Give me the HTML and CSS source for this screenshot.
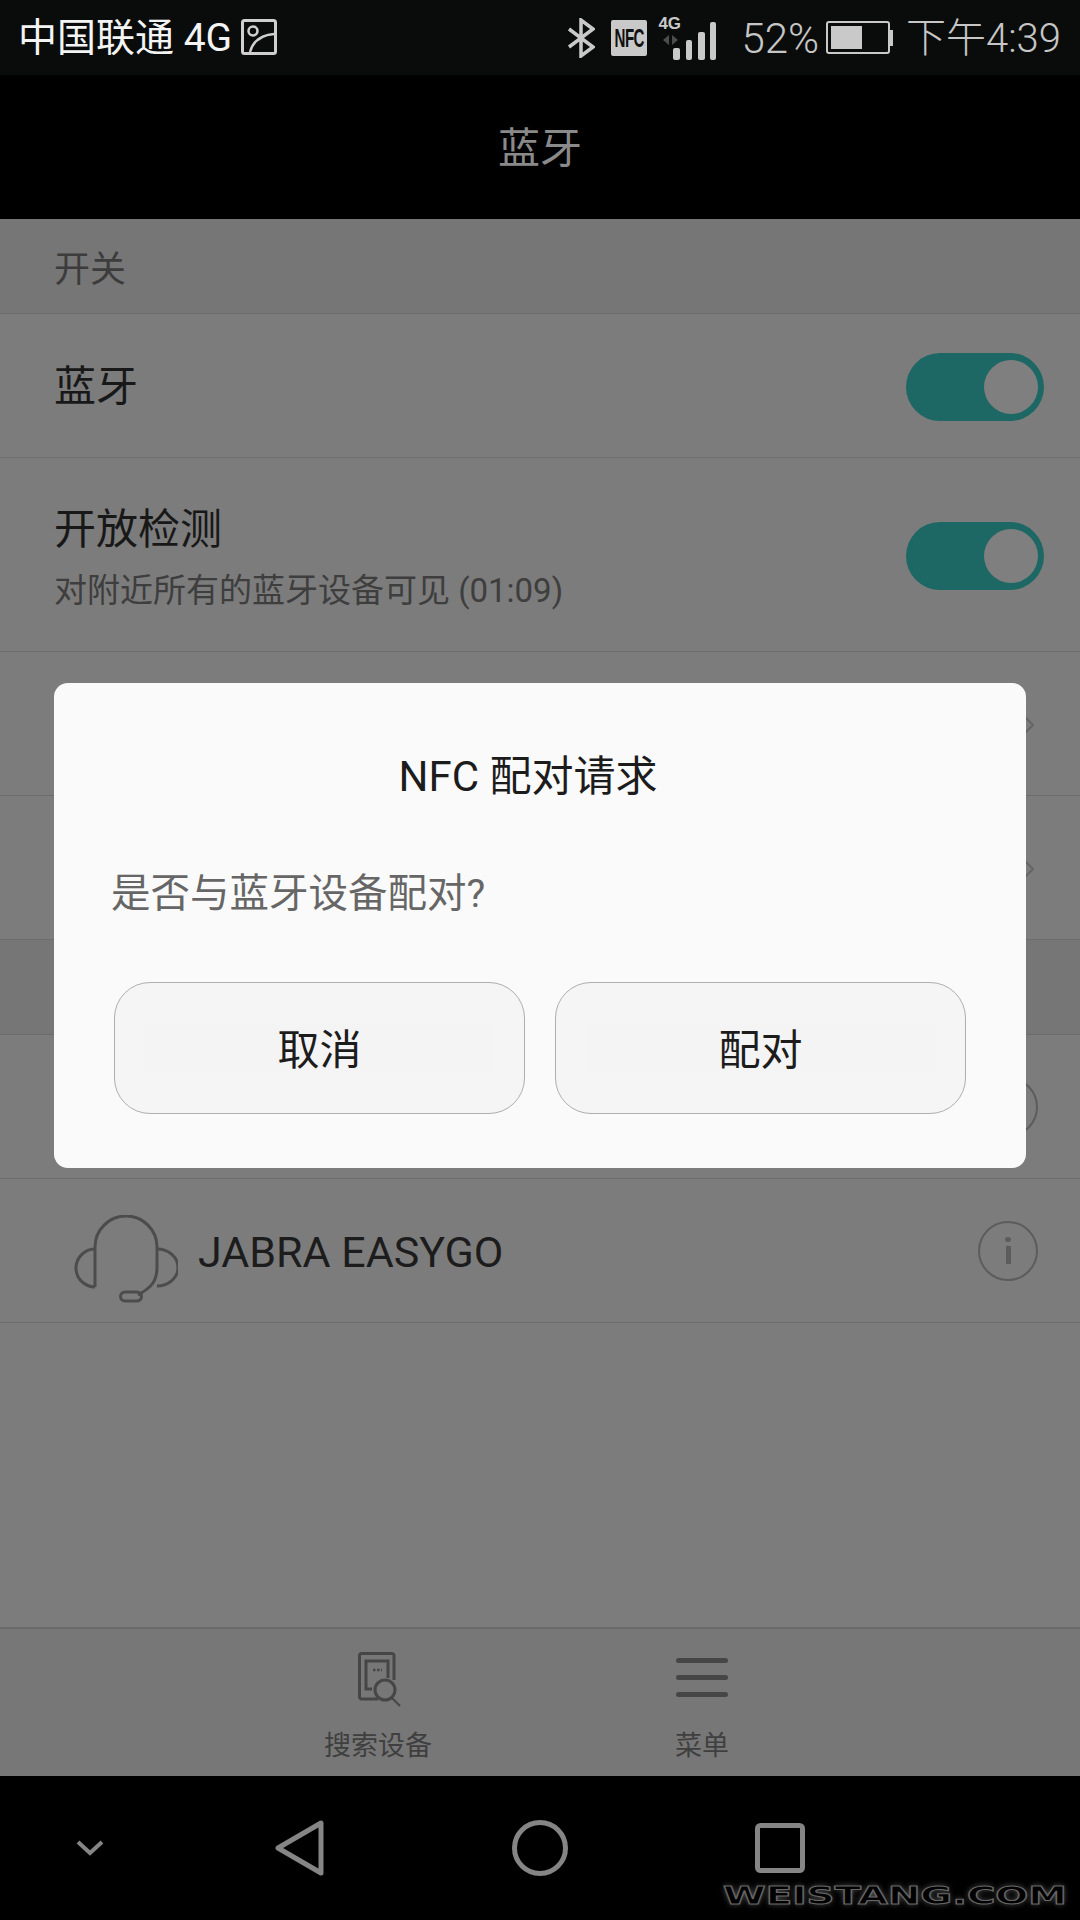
FILE: index.html
```html
<!DOCTYPE html>
<html lang="zh-CN">
<head>
    <meta charset="UTF-8">
    <meta name="viewport" content="width=device-width, initial-scale=1.0">
    <title>蓝牙</title>
    <link rel="stylesheet" href="styles.css">
</head>
<body>
    <div class="screen">
        <!-- Status bar -->
        <div class="status-bar">
            <div class="status-left">
                <span class="carrier">中国联通 4G</span>
                <svg class="pic-icon" width="36" height="36" viewBox="0 0 36 36" fill="none" stroke="#cfcfcf">
                    <rect x="1.5" y="1.5" width="33" height="33" rx="2" stroke-width="3"/>
                    <circle cx="12" cy="12" r="4.5" stroke-width="2.5"/>
                    <path d="M9 33 C12 22 21 16 33 15" stroke-width="2.5"/>
                </svg>
            </div>
            <div class="status-right">
                <svg class="bt-icon" width="28" height="40" viewBox="0 0 28 40" fill="none" stroke="#c9c9c9" stroke-width="3.5">
                    <path d="M2 11 L26 29 L14 38 V2 L26 11 L2 29"/>
                </svg>
                <div class="nfc-box"><span class="nfc-text">NFC</span></div>
                <div class="signal">
                    <span class="net-text">4G</span>
                    <svg width="60" height="46" viewBox="0 0 60 46">
                        <path d="M11 20 L5 25 L11 30 Z M14 20 L20 25 L14 30 Z" fill="#4c4c4c"/>
                        <rect x="15" y="33" width="7" height="12" rx="2" fill="#c9c9c9"/>
                        <rect x="28" y="25" width="6" height="20" rx="2" fill="#c9c9c9"/>
                        <rect x="40" y="17" width="7" height="28" rx="2" fill="#c9c9c9"/>
                        <rect x="52" y="7" width="6" height="38" rx="2" fill="#c9c9c9"/>
                    </svg>
                </div>
                <span class="battery-pct">52%</span>
                <div class="battery"><div class="battery-fill"></div></div>
                <div class="battery-nub"></div>
                <span class="clock">下午4:39</span>
            </div>
        </div>

        <div class="action-bar">蓝牙</div>

        <div class="content">
            <div class="section">开关</div>
            <div class="row">
                <div class="row-title">蓝牙</div>
                <div class="toggle"><div class="knob"></div></div>
            </div>
            <div class="row row-tall">
                <div class="row-text">
                    <div class="row-title">开放检测</div>
                    <div class="row-sub">对附近所有的蓝牙设备可见 (01:09)</div>
                </div>
                <div class="toggle"><div class="knob"></div></div>
            </div>
            <div class="row">
                <div></div>
                <svg class="chevron" width="10" height="20" viewBox="0 0 10 20" fill="none" stroke="#656565" stroke-width="2">
                    <path d="M1 2 L9 10 L1 18"/>
                </svg>
            </div>
            <div class="row">
                <div></div>
                <svg class="chevron" width="10" height="20" viewBox="0 0 10 20" fill="none" stroke="#656565" stroke-width="2">
                    <path d="M1 2 L9 10 L1 18"/>
                </svg>
            </div>
            <div class="section"></div>
            <div class="row">
                <div></div>
                <div class="info"><span class="info-dot"></span><span class="info-bar"></span></div>
            </div>
            <div class="row">
                <div class="device">
                    <svg width="106" height="88" viewBox="0 0 106 88" fill="none" stroke="#4c4c4c" stroke-width="3">
                        <path d="M23 72 V32 A31 31 0 0 1 85 32 V52 C85 66 80 72 66 80"/>
                        <path d="M23 34 A19 19 0 0 0 23 72"/>
                        <path d="M85 34 A21 18.500 0 0 1 85 71"/>
                        <rect x="48.500" y="77" width="21" height="9" rx="4.500"/>
                    </svg>
                    <span class="device-name">JABRA EASYGO</span>
                </div>
                <div class="info"><span class="info-dot"></span><span class="info-bar"></span></div>
            </div>
        </div>

        <!-- Bottom actions -->
        <div class="bottom-bar">
            <div class="action action-search">
                <svg width="44" height="56" viewBox="0 0 44 56" fill="none" stroke="#464646" stroke-width="3">
                    <path d="M20 47 H3 A2 2 0 0 1 1.500 45 V3 A2 2 0 0 1 3 1.500 H34 A2 2 0 0 1 36 3 V28"/>
                    <path d="M14 37 H8 V9 H30 V26"/>
                    <circle cx="27" cy="38" r="10"/>
                    <path d="M34 46 L42 54" stroke-width="2"/>
                    <path d="M15 18 H24" stroke-width="2.500" stroke-dasharray="2.500 1.500"/>
                </svg>
                <span>搜索设备</span>
            </div>
            <div class="action action-menu">
                <svg width="52" height="56" viewBox="0 0 52 56" fill="#464646">
                    <rect x="0" y="3" width="52" height="5" rx="2.500"/>
                    <rect x="0" y="20" width="52" height="5" rx="2.500"/>
                    <rect x="0" y="37" width="52" height="5" rx="2.500"/>
                </svg>
                <span>菜单</span>
            </div>
        </div>

        <!-- Navigation bar -->
        <div class="nav-bar">
            <svg class="nav-down" width="28" height="16" viewBox="0 0 28 16" fill="none" stroke="#858585" stroke-width="4">
                <path d="M2 2 L14 13 L26 2"/>
            </svg>
            <svg class="nav-back" width="50" height="56" viewBox="0 0 50 56" fill="none" stroke="#858585" stroke-width="5" stroke-linejoin="round">
                <path d="M46 3 V53 L3 28 Z"/>
            </svg>
            <svg class="nav-home" width="56" height="56" viewBox="0 0 56 56" fill="none" stroke="#858585" stroke-width="5">
                <circle cx="28" cy="28" r="25.500"/>
            </svg>
            <svg class="nav-recent" width="50" height="50" viewBox="0 0 50 50" fill="none" stroke="#858585" stroke-width="5">
                <rect x="2.500" y="2.500" width="45" height="45" rx="3"/>
            </svg>
        </div>

        <div class="watermark">WEISTANG.COM</div>

        <!-- NFC pairing dialog -->
        <div class="overlay">
            <div class="dialog">
                <div class="dialog-title">NFC 配对请求</div>
                <div class="dialog-msg">是否与蓝牙设备配对?</div>
                <div class="dialog-btns">
                    <div class="btn"><span class="btn-label">取消</span></div>
                    <div class="btn"><span class="btn-label">配对</span></div>
                </div>
            </div>
        </div>
    </div>
</body>
</html>
```

FILE: styles.css
```css
* {
    box-sizing: border-box;
}
body {
    margin: 0;
    padding: 0;
    background-color: #000;
    font-family: Roboto, "Noto Sans CJK SC", sans-serif;
}
.screen {
    position: relative;
    width: 1080px;
    height: 1920px;
    display: flex;
    flex-direction: column;
    overflow: hidden;
    background-color: #7c7c7c;
}
.status-bar {
    height: 75px;
    padding: 2px 19px 0 18px;
    display: flex;
    justify-content: space-between;
    align-items: center;
    background-color: #0a0c0b;
    font-size: 39px;
}
.status-left,
.status-right {
    display: flex;
    align-items: center;
}
.carrier {
    color: #f4f4f4;
    line-height: 1;
}
.pic-icon {
    margin-left: 9px;
    margin-top: -3px;
}
.status-right {
    color: #c6c6c6;
    font-weight: 300;
    line-height: 1;
}
.bt-icon {
    margin-top: -2px;
}
.nfc-box {
    width: 36px;
    height: 36px;
    margin-left: 16px;
    margin-top: -2px;
    display: flex;
    align-items: center;
    justify-content: center;
    background-color: #c9c9c9;
    border-radius: 2px;
}
.nfc-text {
    font-family: "Liberation Sans", sans-serif;
    font-weight: 700;
    font-size: 26px;
    letter-spacing: -1px;
    color: #111;
    transform: scaleX(0.58);
}
.signal {
    position: relative;
    width: 60px;
    height: 46px;
    margin-left: 11px;
    margin-top: -2px;
}
.net-text {
    position: absolute;
    top: 0;
    left: 0;
    font-family: "Liberation Sans", sans-serif;
    font-weight: 700;
    font-size: 17px;
    line-height: 17px;
    color: #c9c9c9;
}
.battery-pct {
    margin-left: 23px;
    font-size: 42px;
}
.battery {
    width: 64px;
    height: 33px;
    margin-left: 7px;
    margin-top: -2px;
    padding: 3px;
    border: 2px solid #c9c9c9;
    border-radius: 3px;
}
.battery-fill {
    width: 31px;
    height: 100%;
    background-color: #c9c9c9;
}
.battery-nub {
    width: 3px;
    height: 16px;
    margin-top: -2px;
    background-color: #c9c9c9;
}
.clock {
    margin-left: 13px;
    font-size: 40px;
}
.action-bar {
    height: 144px;
    padding-bottom: 6px;
    display: flex;
    align-items: center;
    justify-content: center;
    background-color: #000;
    color: #8a8a8a;
    font-size: 42px;
}
.content {
    flex: 1;
}
.section {
    height: 95px;
    padding-left: 54px;
    display: flex;
    align-items: center;
    background-color: #767676;
    border-bottom: 1px solid #6c6c6c;
    color: #3c3c3c;
    font-size: 36px;
}
.row {
    height: 144px;
    display: flex;
    justify-content: space-between;
    align-items: center;
    padding: 3px 36px 0 54px;
    border-bottom: 1px solid #6c6c6c;
}
.row-tall {
    height: 194px;
}
.row-text {
    padding-top: 3px;
}
.row-title {
    color: #181818;
    font-size: 42px;
    line-height: 56px;
}
.row-sub {
    margin-top: 11px;
    color: #3e3e3e;
    font-size: 33px;
    line-height: 44px;
}
.toggle {
    width: 138px;
    height: 68px;
    padding: 7px 6px;
    display: flex;
    justify-content: flex-end;
    background-color: #1d6764;
    border-radius: 34px;
}
.knob {
    width: 54px;
    height: 54px;
    background-color: #7f7f7f;
    border-radius: 50%;
}
.chevron {
    margin-right: 10px;
}
.info {
    width: 60px;
    height: 60px;
    margin-right: 6px;
    margin-top: -3px;
    display: flex;
    flex-direction: column;
    align-items: center;
    justify-content: center;
    gap: 4px;
    border: 2px solid #5c5c5c;
    border-radius: 50%;
}
.info-dot {
    width: 6px;
    height: 5px;
    background-color: #5c5c5c;
    border-radius: 50%;
}
.info-bar {
    width: 5px;
    height: 18px;
    background-color: #5c5c5c;
}
.device {
    display: flex;
    align-items: center;
    gap: 20px;
}
.device svg {
    margin-left: 18px;
    margin-top: 14px;
}
.device-name {
    color: #1c1c1c;
    font-size: 43px;
}
.bottom-bar {
    height: 150px;
    display: flex;
    background-color: #777;
    border-top: 2px solid #6a6a6a;
    color: #3f3f3f;
    font-size: 27px;
}
.action {
    display: flex;
    flex-direction: column;
    align-items: center;
    padding-top: 25px;
    width: 108px;
}
.action span {
    margin-top: 18px;
    white-space: nowrap;
    line-height: 36px;
}
.action-search {
    margin-left: 324px;
}
.action-search svg {
    margin-left: 4px;
    margin-top: -2px;
}
.action-search span {
    margin-top: 20px;
}
.action-menu {
    margin-left: 243px;
    width: 54px;
}
.action-menu svg {
    margin-top: 1px;
}
.action-menu span {
    margin-top: 17px;
}
.nav-bar {
    height: 144px;
    flex-shrink: 0;
    display: flex;
    align-items: center;
    background-color: #000;
    margin-top: -1px;
}
.nav-down {
    margin-left: 76px;
}
.nav-back {
    margin-left: 171px;
}
.nav-home {
    margin-left: 187px;
}
.nav-recent {
    margin-left: 187px;
}
.watermark {
    position: absolute;
    right: 13px;
    bottom: 10px;
    color: #000;
    font-family: "DejaVu Sans", sans-serif;
    font-weight: 700;
    font-size: 25px;
    line-height: 28px;
    -webkit-text-stroke: 1px #666;
    text-shadow: 0 0 5px #555;
    transform: scaleX(1.55);
    transform-origin: right center;
}
.overlay {
    position: absolute;
    top: 683px;
    left: 54px;
    right: 54px;
}
.dialog {
    height: 485px;
    padding-top: 70px;
    background-color: #fafafa;
    border-radius: 14px;
}
.dialog-title {
    padding-right: 24px;
    text-align: center;
    color: #1c1c1c;
    font-size: 42px;
    line-height: 48px;
}
.dialog-msg {
    margin-top: 69px;
    padding-left: 57px;
    color: #666;
    font-size: 39.500px;
    line-height: 48px;
}
.dialog-btns {
    margin-top: 64px;
    padding: 0 60px;
    display: flex;
    gap: 30px;
}
.btn {
    flex: 1;
    height: 132px;
    padding: 0 29px;
    display: flex;
    align-items: center;
    background-color: #f5f5f5;
    border: 1px solid #aeaeae;
    border-radius: 36px;
}
.btn-label {
    flex: 1;
    height: 50px;
    background-color: #f4f4f4;
    color: #1c1c1c;
    font-size: 42px;
    line-height: 56px;
    text-align: center;
}
```
